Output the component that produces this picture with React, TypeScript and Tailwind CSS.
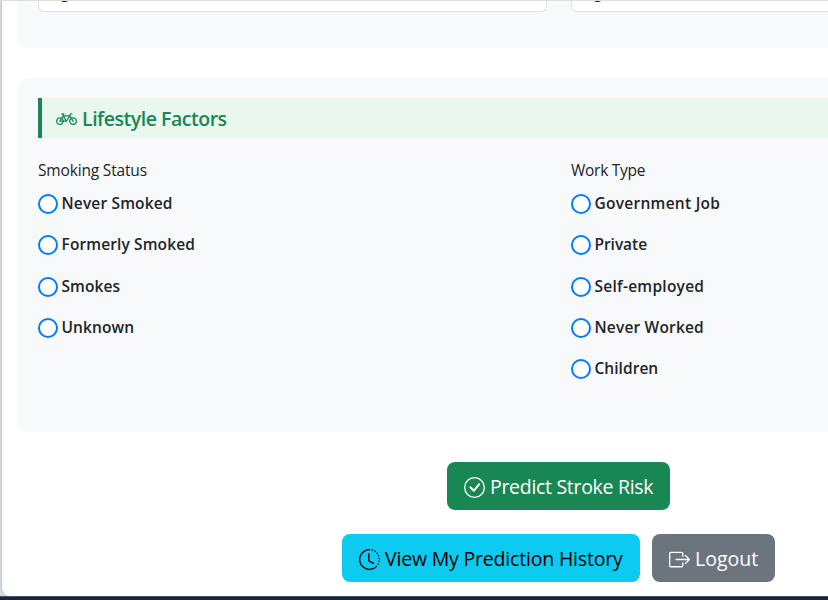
import type { ReactNode } from "react";
import { BsBicycle, BsBoxArrowRight, BsCheckCircle, BsClockHistory } from "react-icons/bs";

type Option = { label: string; tracking: string };

const smoking: Option[] = [
  { label: "Never Smoked", tracking: "tracking-[0.16px]" },
  { label: "Formerly Smoked", tracking: "tracking-[0.12px]" },
  { label: "Smokes", tracking: "tracking-[0.08px]" },
  { label: "Unknown", tracking: "tracking-[0.08px]" },
];

const work: Option[] = [
  { label: "Government Job", tracking: "tracking-[0.27px]" },
  { label: "Private", tracking: "tracking-[-0.05px]" },
  { label: "Self-employed", tracking: "tracking-[0.26px]" },
  { label: "Never Worked", tracking: "tracking-[0.18px]" },
  { label: "Children", tracking: "tracking-[0.04px]" },
];

function RadioGroup({ title, titleClass, options }: { title: string; titleClass: string; options: Option[] }) {
  return (
    <div className="w-[509px] shrink-0">
      <div className={`h-6 text-[15.5px] leading-6 ${titleClass}`}>{title}</div>
      <div className="mt-3 flex flex-col gap-[21.25px]">
        {options.map((o) => (
          <label key={o.label} className="flex h-5 items-center gap-[3.5px]">
            <span className="size-5 shrink-0 rounded-full border-2 border-[#007bff] bg-white" />
            <span className={`-mt-0.5 whitespace-nowrap text-[15.5px] font-semibold leading-5 ${o.tracking}`}>
              {o.label}
            </span>
          </label>
        ))}
      </div>
    </div>
  );
}

function Field() {
  return (
    <div className="h-[11px] w-[509px] shrink-0 overflow-hidden rounded-b-md border border-t-0 border-[#dee2e6] bg-white pl-3">
      <div className="-mt-[19px] text-[15.5px] leading-5 text-[#212529]">Age</div>
    </div>
  );
}

function Button({ className, icon, children }: { className: string; icon: ReactNode; children: ReactNode }) {
  return (
    <button className={`flex h-12 items-center gap-[5px] whitespace-nowrap rounded-lg pl-[17px] pt-0.5 text-[19.5px] ${className}`}>
      {icon}
      <span>{children}</span>
    </button>
  );
}

export default function App() {
  return (
    <div className="flex h-[600px] w-[828px] flex-col overflow-hidden bg-[#cfdbe6] font-['Open_Sans','Noto_Sans',sans-serif] text-[#212529]">
      <div className="h-px shrink-0 bg-[#e1dfdc]" />
      <main className="ml-0.5 h-[595px] shrink-0 overflow-hidden rounded-bl-lg bg-white pl-4 shadow-[-1px_0_1px_rgba(0,0,0,0.07)]">
        <section className="h-[47px] w-[1082px] rounded-b-[10px] bg-[#f8f9fb] px-5">
          <div className="flex gap-6">
            <Field />
            <Field />
          </div>
        </section>
        <section className="mt-[30px] h-[354px] w-[1082px] rounded-[10px] bg-[#f8f9fb] px-5 pt-5">
          <h2 className="flex h-10 items-center gap-[5px] border-l-4 border-[#198754] bg-[#e9f7ef] pl-3.5 text-[19.5px] font-semibold text-[#198754]">
            <BsBicycle className="size-[21px]" />
            <span className="mt-0.5 tracking-[-0.47px]">Lifestyle Factors</span>
          </h2>
          <div className="mt-5 flex gap-6">
            <RadioGroup title="Smoking Status" titleClass="tracking-[-0.17px]" options={smoking} />
            <RadioGroup title="Work Type" titleClass="tracking-[-0.28px]" options={work} />
          </div>
        </section>
        <div className="mt-[30px] flex w-[1081px] flex-col items-center gap-6">
          <Button className="w-[223px] bg-[#198754] tracking-[-0.3px] text-white" icon={<BsCheckCircle className="size-[21px]" />}>
            Predict Stroke Risk
          </Button>
          <div className="flex gap-3">
            <Button className="w-[298px] bg-[#0dcaf0] tracking-[-0.19px] text-black" icon={<BsClockHistory className="size-[21px]" />}>
              View My Prediction History
            </Button>
            <Button className="w-[123px] bg-[#6c757d] text-white" icon={<BsBoxArrowRight className="size-[21px]" />}>
              Logout
            </Button>
          </div>
        </div>
      </main>
      <div className="h-1 shrink-0 border-t border-[#48535b] bg-[#17233b]" />
    </div>
  );
}
